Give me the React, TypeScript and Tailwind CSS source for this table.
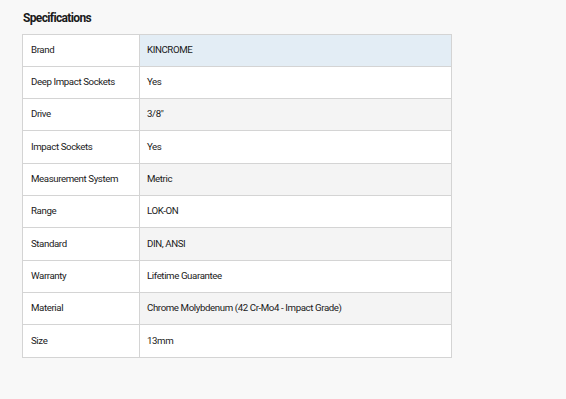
const specs: { label: string; value: string; h: string }[] = [
  { label: "Brand", value: "KINCROME", h: "h-[32px]" },
  { label: "Deep Impact Sockets", value: "Yes", h: "h-[32px]" },
  { label: "Drive", value: "3/8\"", h: "h-[32px]" },
  { label: "Impact Sockets", value: "Yes", h: "h-[33px]" },
  { label: "Measurement System", value: "Metric", h: "h-[32px]" },
  { label: "Range", value: "LOK-ON", h: "h-[32px]" },
  { label: "Standard", value: "DIN, ANSI", h: "h-[33px]" },
  { label: "Warranty", value: "Lifetime Guarantee", h: "h-[32px]" },
  { label: "Material", value: "Chrome Molybdenum (42 Cr-Mo4 - Impact Grade)", h: "h-[32px]" },
  { label: "Size", value: "13mm", h: "h-[33px]" },
];

export default function App() {
  return (
    <div className="min-h-[399px] bg-[#f8f8f8] pl-[22px] pt-[10px] font-['Roboto',sans-serif] text-[#1a1a1a]">
      <h2 className="pl-[1px] text-[12px] font-bold leading-[16px] tracking-[-0.65px]">Specifications</h2>
      <div className="mt-[8px] w-[430px] border-t border-l border-r border-[#d4d4d4] text-[9.7px] tracking-[-0.4px]">
        {specs.map((row, i) => {
          const valueBg = i === 0 ? "bg-[#e3edf5]" : i % 2 === 0 ? "bg-[#f4f4f4]" : "bg-white";
          return (
            <div key={row.label} className={`flex border-b border-[#d4d4d4] ${row.h}`}>
              <div className="flex w-[117px] shrink-0 items-center border-r border-[#d4d4d4] bg-white pl-[8px]">
                {row.label}
              </div>
              <div className={`flex flex-1 items-center pl-[7px] ${valueBg}`}>{row.value}</div>
            </div>
          );
        })}
      </div>
    </div>
  );
}
